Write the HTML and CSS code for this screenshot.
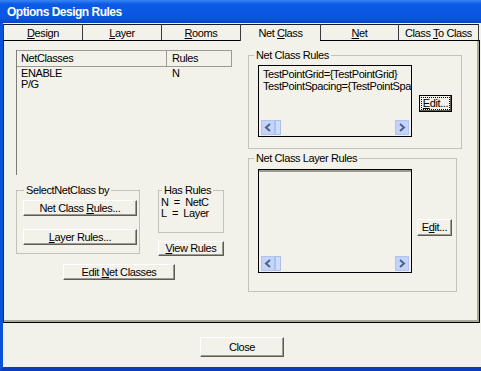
FILE: index.html
```html
<!DOCTYPE html>
<html lang="en">
<head>
  <meta charset="UTF-8" />
  <title>Options Design Rules</title>
  <link rel="stylesheet" href="styles.css">
</head>
<body>
  <div class="window">
    <div class="titlebar">Options Design Rules</div>
    <div class="frame">

      <div class="tabs">
        <div class="tab"><u>D</u>esign</div>
        <div class="tab"><u>L</u>ayer</div>
        <div class="tab"><u>R</u>ooms</div>
        <div class="tab tab-active">Net <u>C</u>lass</div>
        <div class="tab tab-narrow"><u>N</u>et</div>
        <div class="tab tab-last">Class <u>T</u>o Class</div>
      </div>

      <div class="panel">
        <div class="col-left">
          <div class="listview">
            <div class="lv-head">
              <span class="lv-c1">NetClasses</span>
              <span class="lv-c2">Rules</span>
            </div>
            <div class="lv-row"><span class="lv-c1">ENABLE</span><span class="lv-c2">N</span></div>
            <div class="lv-row"><span class="lv-c1">P/G</span><span class="lv-c2"></span></div>
          </div>

          <div class="left-groups">
            <fieldset class="group group-select">
              <legend>SelectNetClass by</legend>
              <button class="btn btn-wide">Net Class <u>R</u>ules...</button>
              <button class="btn btn-wide btn-layer"><u>L</u>ayer Rules...</button>
            </fieldset>
            <div class="has-col">
              <fieldset class="group group-has">
                <legend>Has Rules</legend>
                <div class="has-line">N&nbsp; =&nbsp; NetC</div>
                <div class="has-line">L&nbsp; =&nbsp; Layer</div>
              </fieldset>
              <button class="btn btn-view"><u>V</u>iew Rules</button>
            </div>
          </div>

          <button class="btn btn-editnc">Edit <u>N</u>et Classes</button>
        </div>

        <div class="col-right">
          <fieldset class="group group-rules">
            <legend>Net Class Rules</legend>
            <div class="group-body">
              <div class="listbox lb-rules">
                <div class="lb-text">
                  <div>TestPointGrid={TestPointGrid}</div>
                  <div>TestPointSpacing={TestPointSpacing}</div>
                </div>
                <div class="hscroll">
                  <span class="sb-btn"><svg width="8" height="9" viewBox="0 0 8 9"><polyline points="6,1 2,4.5 6,8" fill="none" stroke="#4d6185" stroke-width="2"/></svg></span>
                  <span class="sb-thumb"></span>
                  <span class="sb-btn sb-right"><svg width="8" height="9" viewBox="0 0 8 9"><polyline points="2,1 6,4.5 2,8" fill="none" stroke="#4d6185" stroke-width="2"/></svg></span>
                </div>
              </div>
              <button class="btn btn-edit btn-focus"><span class="focus-ring"><u>E</u>dit...</span></button>
            </div>
          </fieldset>

          <fieldset class="group group-layer">
            <legend>Net Class Layer Rules</legend>
            <div class="group-body">
              <div class="listbox lb-layer">
                <div class="lb-text"></div>
                <div class="hscroll">
                  <span class="sb-btn"><svg width="8" height="9" viewBox="0 0 8 9"><polyline points="6,1 2,4.5 6,8" fill="none" stroke="#4d6185" stroke-width="2"/></svg></span>
                  <span class="sb-thumb"></span>
                  <span class="sb-btn sb-right"><svg width="8" height="9" viewBox="0 0 8 9"><polyline points="2,1 6,4.5 2,8" fill="none" stroke="#4d6185" stroke-width="2"/></svg></span>
                </div>
              </div>
              <button class="btn btn-edit btn-edit2">E<u>d</u>it...</button>
            </div>
          </fieldset>
        </div>
      </div>

      <div class="footer">
        <button class="btn btn-close">Close</button>
      </div>
    </div>
  </div>
</body>
</html>
```

FILE: styles.css
```css
body {
  margin: 0;
  background: #f3f2ea;
  font-family: "Liberation Sans", Arial, sans-serif;
  font-size: 11px;
  letter-spacing: -0.4px;
  color: #000;
}

.window {
  width: 481px;
  height: 371px;
  background: #f3f2ea;
  overflow: hidden;
  display: flex;
  flex-direction: column;
}

.titlebar {
  height: 23px;
  background: linear-gradient(#3a86f4, #0b5ae6 18%, #0a55e0 80%, #0744c4);
  color: white;
  font-weight: bold;
  font-size: 12px;
  letter-spacing: -0.5px;
  line-height: 24px;
  padding-left: 7px;
}

.frame {
  flex: 1;
  border-left: 3px solid #0a52dc;
  border-bottom: 4px solid #0a3cbc;
  display: flex;
  flex-direction: column;
}

/* Tabs */
.tabs {
  display: flex;
  margin-top: 1px;
  height: 16px;
}

.tab {
  width: 79px;
  box-sizing: border-box;
  border-top: 1px solid #1a1a1a;
  border-left: 1px solid #3a3a3a;
  text-align: center;
  line-height: 17px;
}

.tab-active {
  width: 80px;
  height: 17px;
  margin-bottom: -1px;
  background: #f3f2ea;
  position: relative;
  z-index: 1;
}

.tab-narrow {
  width: 78px;
}

.tab-last {
  width: 81px;
  border-right: 1px solid #3a3a3a;
}

/* Panel */
.panel {
  height: 283px;
  margin-right: 1px;
  box-sizing: border-box;
  border: 1px solid #000;
  border-left-color: #2a2a2a;
  box-shadow: inset -2px -2px #aca899;
  padding: 9px 0 0 12px;
  display: flex;
  gap: 16px;
}

.col-left {
  width: 216px;
  display: flex;
  flex-direction: column;
}

.col-right {
  width: 214px;
  margin-top: -1px;
}

/* List view */
.listview {
  height: 125px;
  border-left: 1px solid #7d7d75;
}

.lv-head {
  height: 17px;
  box-sizing: border-box;
  border: 1px solid #9d9b90;
  border-left: none;
  display: flex;
  line-height: 15px;
}

.lv-head .lv-c1 {
  border-right: 1px solid #9d9b90;
}

.lv-c1 {
  width: 150px;
  box-sizing: border-box;
  padding-left: 4px;
}

.lv-c2 {
  padding-left: 5px;
}

.lv-row {
  display: flex;
  line-height: 11px;
}

.lv-head + .lv-row {
  margin-top: 1px;
}

/* Group boxes */
.group {
  margin: 0;
  padding: 0;
  border: 1px solid #c5c3b6;
  box-sizing: border-box;
  min-width: 0;
}

.group legend {
  padding: 0 2px;
  margin-left: 5px;
  line-height: 13px;
}

.left-groups {
  display: flex;
  gap: 18px;
  margin-top: 9px;
}

.group-select {
  width: 124px;
  height: 70px;
  display: flex;
  flex-direction: column;
}

.group-select legend {
  margin-left: 7px;
}

.has-col {
  width: 66px;
  display: flex;
  flex-direction: column;
}

.group-has {
  height: 49px;
}

.group-has legend {
  margin-left: 3px;
}

.has-line {
  padding-left: 2px;
  line-height: 11px;
}

.group-rules {
  width: 214px;
  height: 100px;
}

.group-layer {
  width: 209px;
  height: 140px;
  margin-top: 3px;
}

.group-body {
  display: flex;
  align-items: flex-start;
}

/* Buttons */
.btn {
  font: inherit;
  letter-spacing: inherit;
  color: #000;
  background: #f3f2ea;
  padding: 0;
  margin: 0;
  box-sizing: border-box;
  border: 1px solid;
  border-color: #fff #5e5c55 #5e5c55 #fff;
  box-shadow: inset -1px -1px #9d9b90;
  line-height: 13px;
}

.btn-wide {
  width: 114px;
  height: 16px;
  margin: 3px 0 0 6px;
}

.btn-layer {
  margin-top: 13px;
}

.btn-view {
  height: 15px;
  margin-top: 8px;
}

.btn-editnc {
  width: 112px;
  height: 16px;
  margin: 8px 0 0 47px;
}

.btn-edit {
  width: 33px;
  height: 17px;
  margin: 33px 0 0 7px;
}

.btn-focus {
  border-color: #000;
  box-shadow: inset -1px -1px #5e5c55;
  padding: 1px;
}

.focus-ring {
  display: block;
  border: 1px dotted #000;
  line-height: 11px;
}

.btn-edit2 {
  width: 35px;
  margin: 54px 0 0 5px;
}

.btn-close {
  width: 84px;
  height: 20px;
}

/* List boxes */
.listbox {
  width: 154px;
  box-sizing: border-box;
  border: 1px solid #000;
  display: flex;
  flex-direction: column;
  margin-left: 9px;
}

.lb-rules {
  height: 72px;
  margin-top: 3px;
}

.lb-layer {
  height: 104px;
  margin-top: 4px;
  box-shadow: inset 0 2px #9d9b90;
}

.lb-text {
  flex: 1;
  padding: 2px 0 0 4px;
  white-space: nowrap;
  overflow: hidden;
  line-height: 12px;
}

.hscroll {
  height: 15px;
  margin: 0 2px 1px 2px;
  display: flex;
}

.sb-btn {
  width: 14px;
  box-sizing: border-box;
  background: #c3d3fb;
  border: 1px solid #b0c3ee;
  display: flex;
  align-items: center;
  justify-content: center;
}

.sb-thumb {
  width: 6px;
  box-sizing: border-box;
  background: #cfdcfb;
  border: 1px solid #aebfe6;
}

.sb-right {
  margin-left: auto;
}

/* Footer */
.footer {
  flex: 1;
  display: flex;
  justify-content: center;
  align-items: flex-start;
  padding-top: 14px;
}
```
